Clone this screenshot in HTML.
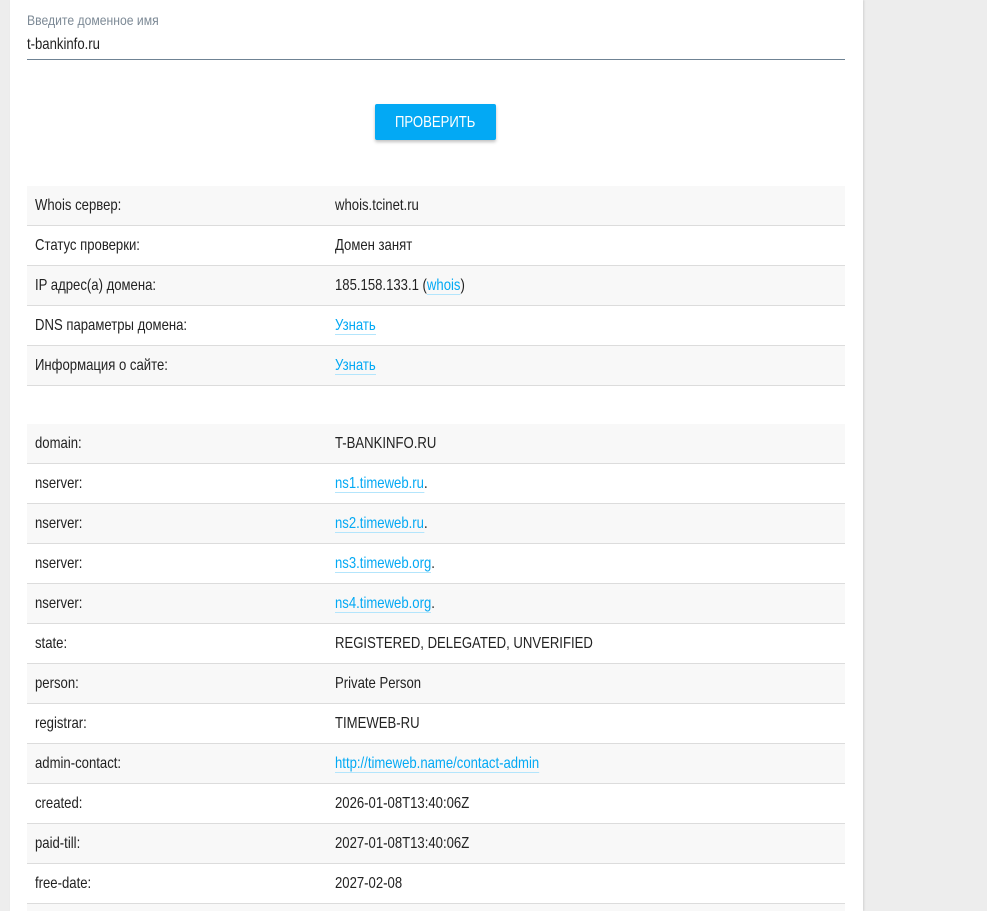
<!DOCTYPE html>
<html><head><meta charset="utf-8"><style>
html,body{margin:0;padding:0;}
body{width:987px;height:911px;background:#ededed;overflow:hidden;font-family:"Liberation Sans",sans-serif;color:#222;position:relative;}
.card{position:absolute;left:10px;top:0;width:853px;height:911px;background:#fff;box-shadow:1px 0 2px rgba(0,0,0,.12);overflow:hidden;}
.s{display:inline-block;transform:scaleX(0.82);transform-origin:0 50%;white-space:nowrap;}
.lbl{position:absolute;left:17px;top:12px;font-size:14px;color:#7d8a96;}
.inp{position:absolute;left:17px;top:36px;font-size:16px;color:#222;}
.line{position:absolute;left:17px;top:59px;width:818px;height:1px;background:#6f8394;}
.btn{position:absolute;left:365px;top:104px;width:121px;height:36px;background:#03a9f4;color:#fff;font-size:16px;line-height:37px;border-radius:2px;box-shadow:0 2px 3px rgba(0,0,0,.25);}
.btn .s{position:absolute;left:20px;top:0;}
table{position:absolute;left:17px;width:818px;border-collapse:collapse;font-size:16px;table-layout:fixed;}
td{height:38px;border-bottom:1px solid #dcdcdc;padding:1px 0 0 8px;vertical-align:middle;}
td:first-child{width:292px;}
tr:nth-child(odd) td{background:#f8f8f8;}
a{color:#03a9f4;text-decoration:none;border-bottom:1px solid #b3e5fc;}
</style></head><body>
<div class="card">
<div class="lbl"><span class="s" style="transform:scaleX(.87)">Введите доменное имя</span></div>
<div class="inp"><span class="s">t-bankinfo.ru</span></div>
<div class="line"></div>
<div class="btn"><span class="s">ПРОВЕРИТЬ</span></div>
<table style="top:186px">
<tr><td><span class="s">Whois сервер:</span></td><td><span class="s">whois.tcinet.ru</span></td></tr>
<tr><td><span class="s">Статус проверки:</span></td><td><span class="s">Домен занят</span></td></tr>
<tr><td><span class="s">IP адрес(а) домена:</span></td><td><span class="s">185.158.133.1 (<a>whois</a>)</span></td></tr>
<tr><td><span class="s">DNS параметры домена:</span></td><td><span class="s"><a>Узнать</a></span></td></tr>
<tr><td><span class="s">Информация о сайте:</span></td><td><span class="s"><a>Узнать</a></span></td></tr>
</table>
<table style="top:424px">
<tr><td><span class="s">domain:</span></td><td><span class="s">T-BANKINFO.RU</span></td></tr>
<tr><td><span class="s">nserver:</span></td><td><span class="s"><a>ns1.timeweb.ru</a>.</span></td></tr>
<tr><td><span class="s">nserver:</span></td><td><span class="s"><a>ns2.timeweb.ru</a>.</span></td></tr>
<tr><td><span class="s">nserver:</span></td><td><span class="s"><a>ns3.timeweb.org</a>.</span></td></tr>
<tr><td><span class="s">nserver:</span></td><td><span class="s"><a>ns4.timeweb.org</a>.</span></td></tr>
<tr><td><span class="s">state:</span></td><td><span class="s">REGISTERED, DELEGATED, UNVERIFIED</span></td></tr>
<tr><td><span class="s">person:</span></td><td><span class="s">Private Person</span></td></tr>
<tr><td><span class="s">registrar:</span></td><td><span class="s">TIMEWEB-RU</span></td></tr>
<tr><td><span class="s">admin-contact:</span></td><td><span class="s"><a>http://timeweb.name/contact-admin</a></span></td></tr>
<tr><td><span class="s">created:</span></td><td><span class="s">2026-01-08T13:40:06Z</span></td></tr>
<tr><td><span class="s">paid-till:</span></td><td><span class="s">2027-01-08T13:40:06Z</span></td></tr>
<tr><td><span class="s">free-date:</span></td><td><span class="s">2027-02-08</span></td></tr>
<tr><td><span class="s">source:</span></td><td><span class="s">TCI</span></td></tr>
</table>
</div>
</body></html>
